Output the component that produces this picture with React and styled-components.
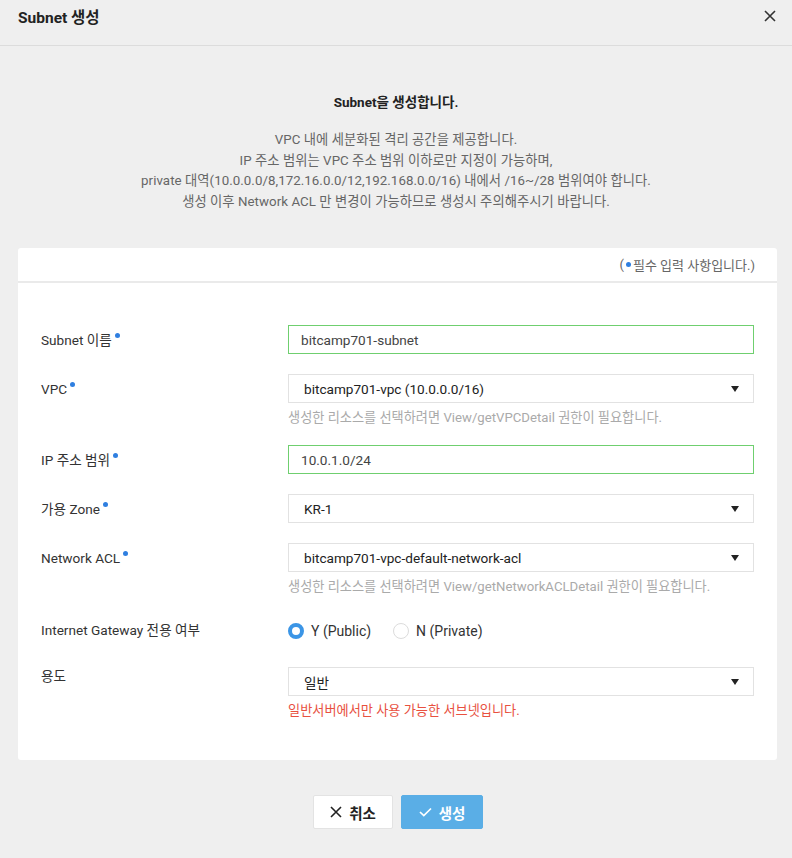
import React from "react";
import styled, { createGlobalStyle } from "styled-components";

const Global = createGlobalStyle`
  html, body { margin: 0; padding: 0; background: #efefef; }
  body { font-family: Roboto, "Noto Sans CJK KR", sans-serif; color: #333; }
  * { box-sizing: border-box; }
`;

const Page = styled.div`
  width: 792px;
  min-height: 858px;
  background: #efefef;
  display: flex;
  flex-direction: column;
`;

const Header = styled.div`
  height: 46px;
  display: flex;
  align-items: center;
  justify-content: space-between;
  padding: 0 14px 0 18px;
  border-bottom: 1px solid #dcdcdc;
`;

const Title = styled.h1`
  margin: 0;
  font-size: 15.5px;
  font-weight: 700;
  color: #222;
  padding-bottom: 14px;
`;

const Close = styled.button`
  border: 0;
  background: none;
  padding: 0;
  width: 14px;
  height: 14px;
  display: flex;
  margin-bottom: 11px;
`;

const Intro = styled.div`
  padding-top: 48px;
  text-align: center;
`;

const IntroTitle = styled.div`
  font-size: 13.5px;
  font-weight: 700;
  color: #222;
  line-height: 16px;
  margin-bottom: 20px;
`;

const IntroText = styled.div`
  font-size: 13.3px;
  color: #666;
  line-height: 20.6px;
  letter-spacing: 0.05px;
`;

const Card = styled.div`
  margin: 36px 15px 0 18px;
  background: #fff;
  border-radius: 3px;
`;

const CardHead = styled.div`
  height: 35px;
  display: flex;
  align-items: center;
  justify-content: flex-end;
  padding-right: 22px;
  border-bottom: 2px solid #eaeaea;
  font-size: 13px;
  color: #666;
`;

const Dot = styled.span`
  display: inline-block;
  width: 5px;
  height: 5px;
  border-radius: 50%;
  background: #2f7fe0;
  margin: 0 2px 0 ${(p) => p.$ml || 3}px;
  vertical-align: ${(p) => p.$va || 7}px;
`;

const Form = styled.div`
  padding: 42px 23px 42px 23px;
  display: flex;
  flex-direction: column;
  gap: 20px;
`;

const Row = styled.div`
  display: grid;
  grid-template-columns: 247px 466px;
`;

const Label = styled.div`
  font-size: 13.6px;
  color: #333;
  line-height: 16px;
  padding-top: ${(p) => p.$pt ?? 7}px;
`;

const Field = styled.div`
  display: flex;
  flex-direction: column;
  min-height: ${(p) => p.$mh || 0}px;
  justify-content: ${(p) => (p.$center ? "center" : "flex-start")};
`;

const Input = styled.div`
  height: 29px;
  border: 1px solid #6fcf6f;
  display: flex;
  align-items: center;
  padding-left: 12px;
  font-size: 13.6px;
  color: #444;
`;

const Select = styled.div`
  height: 29px;
  border: 1px solid #e2e2e2;
  display: flex;
  align-items: center;
  justify-content: space-between;
  padding: 0 14px 0 15px;
  font-size: 13.6px;
  color: #222;
`;

const Caret = styled.span`
  width: 0;
  height: 0;
  border-left: 4px solid transparent;
  border-right: 4px solid transparent;
  border-top: 6px solid #222;
`;

const Help = styled.div`
  margin-top: 8px;
  font-size: 13.2px;
  line-height: 14px;
  color: ${(p) => (p.$error ? "#e8513f" : "#aaa")};
`;

const Radios = styled.div`
  display: flex;
  align-items: center;
  gap: 22px;
  font-size: 14px;
  color: #333;
`;

const RadioItem = styled.label`
  display: flex;
  align-items: center;
  gap: 7px;
`;

const RadioCircle = styled.span`
  width: 16px;
  height: 16px;
  border-radius: 50%;
  border: ${(p) => (p.$on ? "4.5px solid #3b95e6" : "1px solid #dcdcdc")};
  background: #fff;
`;

const Footer = styled.div`
  display: flex;
  justify-content: center;
  gap: 8px;
  padding: 35px 0 0 4px;
`;

const Button = styled.button`
  height: 34px;
  width: ${(p) => p.$w}px;
  border-radius: 2px;
  border: 1px solid ${(p) => (p.$primary ? "#5aaee6" : "#e3e3e3")};
  background: ${(p) => (p.$primary ? "#5aaee6" : "#fff")};
  color: ${(p) => (p.$primary ? "#fff" : "#222")};
  font-family: Roboto, "Noto Sans CJK KR", sans-serif;
  font-size: 14.5px;
  font-weight: 700;
  display: flex;
  align-items: center;
  justify-content: center;
  gap: 7px;
`;

const Req = () => <Dot />;

export default function App() {
  return (
    <Page>
      <Global />
      <Header>
        <Title>Subnet 생성</Title>
        <Close aria-label="close">
          <svg width="12" height="12" viewBox="0 0 12 12">
            <path d="M1 1L11 11M11 1L1 11" stroke="#333" strokeWidth="1.6" />
          </svg>
        </Close>
      </Header>
      <Intro>
        <IntroTitle>Subnet을 생성합니다.</IntroTitle>
        <IntroText>
          VPC 내에 세분화된 격리 공간을 제공합니다.
          <br />
          IP 주소 범위는 VPC 주소 범위 이하로만 지정이 가능하며,
          <br />
          private 대역(10.0.0.0/8,172.16.0.0/12,192.168.0.0/16) 내에서 /16~/28 범위여야 합니다.
          <br />
          생성 이후 Network ACL 만 변경이 가능하므로 생성시 주의해주시기 바랍니다.
        </IntroText>
      </Intro>
      <Card>
        <CardHead>
          (<Dot $ml={2} $va={4} />필수 입력 사항입니다.)
        </CardHead>
        <Form>
          <Row>
            <Label>Subnet 이름<Req /></Label>
            <Field>
              <Input>bitcamp701-subnet</Input>
            </Field>
          </Row>
          <Row>
            <Label>VPC<Req /></Label>
            <Field>
              <Select>
                bitcamp701-vpc (10.0.0.0/16)
                <Caret />
              </Select>
              <Help>생성한 리소스를 선택하려면 View/getVPCDetail 권한이 필요합니다.</Help>
            </Field>
          </Row>
          <Row>
            <Label>IP 주소 범위<Req /></Label>
            <Field>
              <Input>10.0.1.0/24</Input>
            </Field>
          </Row>
          <Row>
            <Label>가용 Zone<Req /></Label>
            <Field>
              <Select>
                KR-1
                <Caret />
              </Select>
            </Field>
          </Row>
          <Row>
            <Label>Network ACL<Req /></Label>
            <Field>
              <Select>
                bitcamp701-vpc-default-network-acl
                <Caret />
              </Select>
              <Help>생성한 리소스를 선택하려면 View/getNetworkACLDetail 권한이 필요합니다.</Help>
            </Field>
          </Row>
          <Row>
            <Label $pt={8}>Internet Gateway 전용 여부</Label>
            <Field $mh={33} $center>
              <Radios>
                <RadioItem>
                  <RadioCircle $on />
                  Y (Public)
                </RadioItem>
                <RadioItem>
                  <RadioCircle />
                  N (Private)
                </RadioItem>
              </Radios>
            </Field>
          </Row>
          <Row>
            <Label $pt={1}>용도</Label>
            <Field>
              <Select>
                일반
                <Caret />
              </Select>
              <Help $error>일반서버에서만 사용 가능한 서브넷입니다.</Help>
            </Field>
          </Row>
        </Form>
      </Card>
      <Footer>
        <Button $w={80}>
          <svg width="12" height="12" viewBox="0 0 12 12">
            <path d="M1 1L11 11M11 1L1 11" stroke="#222" strokeWidth="1.6" />
          </svg>
          취소
        </Button>
        <Button $w={82} $primary>
          <svg width="13" height="10" viewBox="0 0 13 10">
            <path d="M1 5L4.8 8.6L12 1.5" stroke="#fff" strokeWidth="1.7" fill="none" />
          </svg>
          생성
        </Button>
      </Footer>
    </Page>
  );
}
